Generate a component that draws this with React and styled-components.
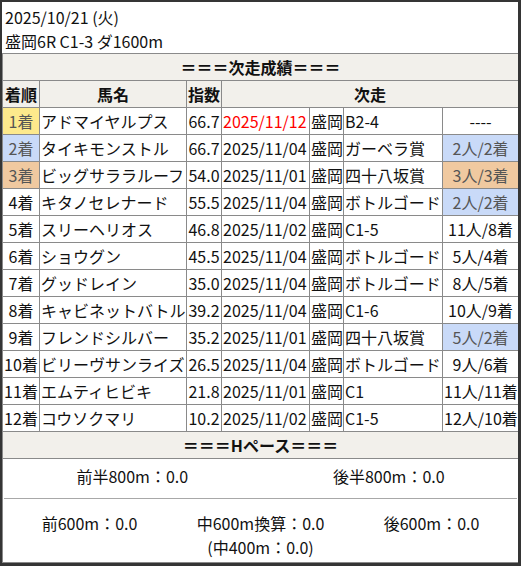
import React from "react";
import styled, { createGlobalStyle } from "styled-components";

const Global = createGlobalStyle`
  html, body { margin: 0; padding: 0; background: #fff; }
  body { font-family: "Noto Sans CJK JP", "Noto Sans", sans-serif; color: #111; }
`;

const Frame = styled.div`
  width: 521px;
  height: 566px;
  box-sizing: border-box;
  border-style: solid;
  border-color: #353535;
  border-width: 2px 3px 3px 2px;
  background: #fff;
  overflow: hidden;
  font-size: 16px;
  line-height: 24px;
`;

const Title = styled.div`
  padding: 3px 3px 0;
  height: 48px;
`;

const Line = styled.div`
  white-space: nowrap;
`;

const Table = styled.table`
  width: 516px;
  border-collapse: collapse;
  table-layout: fixed;
  border-left: 0;
  & td, & th {
    border: 1px solid #8a8a8a;
    padding: 1px;
    line-height: 24px;
    white-space: nowrap;
    overflow: hidden;
  }
`;

const SectionTh = styled.th`
  background: #f2f0eb;
  font-size: 16px;
  font-weight: 700;
  text-align: center;
  color: #111;
`;

const HeadTh = styled.th`
  background: #f2f0eb;
  font-weight: 700;
  text-align: center;
  color: #111;
`;

const Td = styled.td`
  text-align: ${(p) => p.$align || "left"};
  background: ${(p) => p.$bg || "#fff"};
  color: ${(p) => p.$color || "#111"};
`;

const PaceCell = styled.td`
  && { padding: 0 1px; }
`;

const PaceRow = styled.div`
  display: grid;
  grid-template-columns: repeat(${(p) => p.$cols}, 1fr);
  text-align: center;
  padding: ${(p) => p.$pad};
  border-bottom: ${(p) => (p.$divider ? "1px solid #a8a8a8" : "0")};
`;

const RANK_BG = { 1: "#fde98c", 2: "#c9daf8", 3: "#f0c9a0" };
const RES_BG = { blue: "#c9daf8", peach: "#f0c9a0" };

const rows = [
  [1, "アドマイヤルプス", "66.7", "2025/11/12", "B2-4", "----", null, true],
  [2, "タイキモンストル", "66.7", "2025/11/04", "ガーベラ賞", "2人/2着", "blue"],
  [3, "ビッグサララルーフ", "54.0", "2025/11/01", "四十八坂賞", "3人/3着", "peach"],
  [4, "キタノセレナード", "55.5", "2025/11/04", "ボトルゴード", "2人/2着", "blue"],
  [5, "スリーヘリオス", "46.8", "2025/11/02", "C1-5", "11人/8着"],
  [6, "ショウグン", "45.5", "2025/11/04", "ボトルゴード", "5人/4着"],
  [7, "グッドレイン", "35.0", "2025/11/04", "ボトルゴード", "8人/5着"],
  [8, "キャビネットバトル", "39.2", "2025/11/04", "C1-6", "10人/9着"],
  [9, "フレンドシルバー", "35.2", "2025/11/01", "四十八坂賞", "5人/2着", "blue"],
  [10, "ビリーヴサンライズ", "26.5", "2025/11/04", "ボトルゴード", "9人/6着"],
  [11, "エムティヒビキ", "21.8", "2025/11/01", "C1", "11人/11着"],
  [12, "コウソクマリ", "10.2", "2025/11/02", "C1-5", "12人/10着"],
];

export default function App() {
  return (
    <>
      <Global />
      <Frame>
        <Title>
          <Line>2025/10/21 (火)</Line>
          <Line>盛岡6R C1-3 ダ1600m</Line>
        </Title>
        <Table>
          <colgroup>
            <col style={{ width: 37 }} />
            <col style={{ width: 147 }} />
            <col style={{ width: 35 }} />
            <col style={{ width: 88 }} />
            <col style={{ width: 34 }} />
            <col style={{ width: 99 }} />
            <col style={{ width: 76 }} />
          </colgroup>
          <tbody>
            <tr>
              <SectionTh colSpan={7}>＝＝＝次走成績＝＝＝</SectionTh>
            </tr>
            <tr>
              <HeadTh>着順</HeadTh>
              <HeadTh>馬名</HeadTh>
              <HeadTh>指数</HeadTh>
              <HeadTh colSpan={4}>次走</HeadTh>
            </tr>
            {rows.map(([rank, name, idx, date, race, res, resBg, red]) => (
              <tr key={rank}>
                <Td $align="center" $bg={RANK_BG[rank]} $color={RANK_BG[rank] ? "#555" : "#111"}>
                  {rank}着
                </Td>
                <Td>{name}</Td>
                <Td $align="center">{idx}</Td>
                <Td $color={red ? "#f00" : "#111"}>{date}</Td>
                <Td>盛岡</Td>
                <Td>{race}</Td>
                <Td $align="center" $bg={resBg ? RES_BG[resBg] : undefined} $color={resBg ? "#555" : "#111"}>
                  {res}
                </Td>
              </tr>
            ))}
            <tr>
              <SectionTh colSpan={7}>＝＝＝Hペース＝＝＝</SectionTh>
            </tr>
            <tr>
              <PaceCell colSpan={7}>
                <PaceRow $cols={2} $pad="5px 0 10px" $divider>
                  <div>前半800m：0.0</div>
                  <div>後半800m：0.0</div>
                </PaceRow>
                <PaceRow $cols={3} $pad="12px 0 3px">
                  <div>前600m：0.0</div>
                  <div>
                    中600m換算：0.0
                    <br />
                    (中400m：0.0)
                  </div>
                  <div>後600m：0.0</div>
                </PaceRow>
              </PaceCell>
            </tr>
          </tbody>
        </Table>
      </Frame>
    </>
  );
}
